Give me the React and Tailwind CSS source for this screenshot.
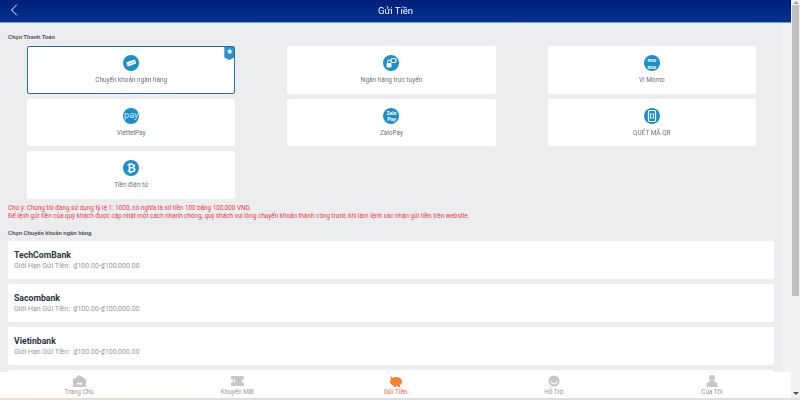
import { ChevronLeft } from "lucide-react";

const methods = [
  { label: "Chuyển khoản ngân hàng", icon: "card", active: true },
  { label: "Ngân hàng trực tuyến", icon: "online" },
  { label: "Ví Momo", icon: "momo" },
  { label: "ViettelPay", icon: "viettel" },
  { label: "ZaloPay", icon: "zalo" },
  { label: "QUÉT MÃ QR", icon: "qr" },
  { label: "Tiền điện tử", icon: "bitcoin" },
];

const banks = ["TechComBank", "Sacombank", "Vietinbank"];

function MethodIcon({ icon }) {
  if (icon === "momo") {
    return (
      <div className="w-4 h-4 rounded-full bg-[#1b8fcb] flex flex-col items-center justify-center text-white text-[6px] leading-[7px] font-bold">
        <span>mo</span>
        <span>mo</span>
      </div>
    );
  }
  if (icon === "viettel") {
    return (
      <div className="w-4 h-4 rounded-full bg-[#1b8fcb] flex items-center justify-center text-[#cfeaf8] text-[9px] leading-none">
        pay
      </div>
    );
  }
  if (icon === "zalo") {
    return (
      <div className="w-4 h-4 rounded-full bg-[#1b8fcb] flex flex-col items-center justify-center text-white text-[5px] leading-[6px] font-bold">
        <span>Zalo</span>
        <span>Pay</span>
      </div>
    );
  }
  if (icon === "bitcoin") {
    return (
      <div className="w-4 h-4 rounded-full bg-[#1b8fcb] flex items-center justify-center text-white text-[11px] leading-none font-bold">
        ₿
      </div>
    );
  }
  return (
    <svg width="16" height="16" viewBox="0 0 16 16">
      <circle cx="8" cy="8" r="8" fill="#1b8fcb" />
      {icon === "card" && (
        <>
          <path d="M3 7.500 11.500 4.500 13 6.500 4.500 9.500Z" fill="#fff" />
          <path d="M3.500 10 13 7v1.600L5 11.500Z" fill="#fff" />
        </>
      )}
      {icon === "online" && (
        <>
          <rect x="8" y="3.500" width="5" height="4" rx="1.500" fill="none" stroke="#fff" strokeWidth="1.200" />
          <rect x="3.500" y="8" width="5" height="4.500" rx="1" fill="#fff" />
          <path d="M4.500 8V6.500a1.500 1.500 0 0 1 3 0" fill="none" stroke="#fff" strokeWidth="1" />
        </>
      )}
      {icon === "qr" && (
        <>
          <rect x="4.500" y="2.500" width="7" height="11" rx="1.200" fill="none" stroke="#fff" strokeWidth="1.200" />
          <rect x="6.500" y="6" width="3" height="4" fill="none" stroke="#fff" strokeWidth="0.800" />
        </>
      )}
    </svg>
  );
}

function MethodCard({ item }) {
  return (
    <div
      className={`relative h-[47.5px] bg-white rounded-[2px] flex flex-col items-center ${
        item.active ? "border border-[#2a6fb0] pt-[8px]" : "pt-[9px]"
      }`}
    >
      <MethodIcon icon={item.icon} />
      <div className="mt-[5px] text-[6.430px] leading-[9px] text-[#6b7178]">{item.label}</div>
      {item.active && (
        <div className="absolute top-0 right-0 w-[10px] h-[13px] bg-[#2a8fd0] flex items-start justify-center text-white text-[8px] leading-[10px] [clip-path:polygon(0_0,100%_0,100%_80%,50%_100%,0_80%)]">
          ★
        </div>
      )}
    </div>
  );
}

function NavItem({ label, active, children }) {
  return (
    <div className="flex-1 flex flex-col items-center">
      {children}
      <div className={`text-[6.400px] leading-[9px] mt-[1px] ${active ? "text-[#f0653a]" : "text-[#94979c]"}`}>{label}</div>
    </div>
  );
}

export default function App() {
  return (
    <div className="h-[400px] w-[800px] overflow-hidden flex flex-col font-['Roboto',Arial,sans-serif] blur-[0.5px]">
      <div className="flex-1 min-h-0 flex">
        <div className="w-[791px] flex flex-col bg-[#f1f2f3]">
          <header className="h-[23px] shrink-0 relative flex items-center justify-center bg-gradient-to-b from-[#001f7a] to-[#023192] border-b border-[#7ea0c8] text-white text-[9.500px]">
            <ChevronLeft className="absolute left-[4px] top-0 w-5 h-5" strokeWidth={1.200} />
            Gửi Tiền
          </header>

          <main className="flex-1 overflow-hidden bg-[#ecedef] mr-[9px]">
            <div className="pl-2 pt-[10px] text-[6px] leading-[8px] font-bold text-[#565c64]">Chọn Thanh Toán</div>
            <div className="grid grid-cols-3 gap-x-[52px] gap-y-[5px] ml-[27px] mr-[26px] mt-[5px]">
              {methods.map((m) => (
                <MethodCard key={m.label} item={m} />
              ))}
            </div>
            <div className="pl-2 mt-[5px] text-[6.330px] leading-[8px] text-[#ea4049]">
              <p>Chú ý: Chúng tôi đang sử dụng tỷ lệ 1: 1000, có nghĩa là số tiền 100 bằng 100,000 VND.</p>
              <p>Để lệnh gửi tiền của quý khách được cập nhật một cách nhanh chóng, quý khách vui lòng chuyển khoản thành công trước khi làm lệnh xác nhận gửi tiền trên website.</p>
            </div>
            <div className="pl-2 mt-[9px] text-[6px] leading-[8px] font-bold text-[#565c64]">Chọn Chuyển khoản ngân hàng</div>
            <div className="ml-2 mr-[8px] mt-[4px] flex flex-col gap-[5px]">
              {banks.map((b) => (
                <div key={b} className="h-[38px] bg-white rounded-[2px] pl-[6px] pt-[9px]">
                  <div className="text-[8.700px] leading-[11px] font-bold text-[#2a3340]">{b}</div>
                  <div className="text-[7px] leading-[10px] text-[#94979c]">Giới Hạn Gửi Tiền:&nbsp; ₫100.00-₫100,000.00</div>
                </div>
              ))}
              <div className="h-[38px] bg-white rounded-[2px]" />
            </div>
          </main>

          <nav className="h-[26px] shrink-0 bg-white flex pt-[3px]">
            <NavItem label="Trang Chủ">
              <svg width="13" height="12" viewBox="0 0 13 12">
                <path d="M6.500 0 13 4.500V12H0V4.500Z" fill="#c4c6c8" />
                <rect x="4" y="8" width="5" height="1.500" fill="#fff" />
              </svg>
            </NavItem>
            <NavItem label="Khuyến Mãi">
              <svg width="13" height="12" viewBox="0 0 13 12">
                <path d="M0 1h13v3a2 2 0 0 0 0 4v3H0V8a2 2 0 0 0 0-4Z" fill="#c4c6c8" />
                <rect x="3" y="4" width="1" height="4" fill="#fff" />
              </svg>
            </NavItem>
            <NavItem label="Gửi Tiền" active>
              <svg width="14" height="12" viewBox="0 0 14 12">
                <ellipse cx="7" cy="6.500" rx="6" ry="4.500" fill="#f5812a" />
                <path d="M1 1l3 2-2 2ZM5 10h2v2H5ZM9 10h2v2H9Z" fill="#f5812a" />
              </svg>
            </NavItem>
            <NavItem label="Hỗ Trợ">
              <svg width="12" height="12" viewBox="0 0 12 12">
                <circle cx="6" cy="6" r="5.500" fill="#c4c6c8" />
                <path d="M3 6a3 3 0 0 0 6 0" fill="none" stroke="#fff" strokeWidth="1" />
              </svg>
            </NavItem>
            <NavItem label="Của Tôi">
              <svg width="12" height="12" viewBox="0 0 12 12">
                <circle cx="6" cy="3" r="3" fill="#c4c6c8" />
                <path d="M4 6h4l3.500 2.500V12H.5V8.500Z" fill="#c4c6c8" />
              </svg>
            </NavItem>
          </nav>
        </div>

        <aside className="w-[9px] bg-[#f1f1f1] flex flex-col items-center">
          <div className="h-[5px] flex items-center justify-center">
            <div className="w-0 h-0 border-x-[3px] border-x-transparent border-b-[3px] border-b-[#a3a3a3]" />
          </div>
          <div className="w-[7px] h-[291px] bg-[#c1c1c1]" />
          <div className="flex-1 flex items-end pb-[3px]">
            <div className="w-0 h-0 border-x-[3px] border-x-transparent border-t-[3px] border-t-[#505050]" />
          </div>
        </aside>
      </div>
      <div className="h-[2px] shrink-0 bg-gradient-to-r from-[#e8e0d6] via-[#dcdde0] to-[#e0e0e0]" />
    </div>
  );
}
